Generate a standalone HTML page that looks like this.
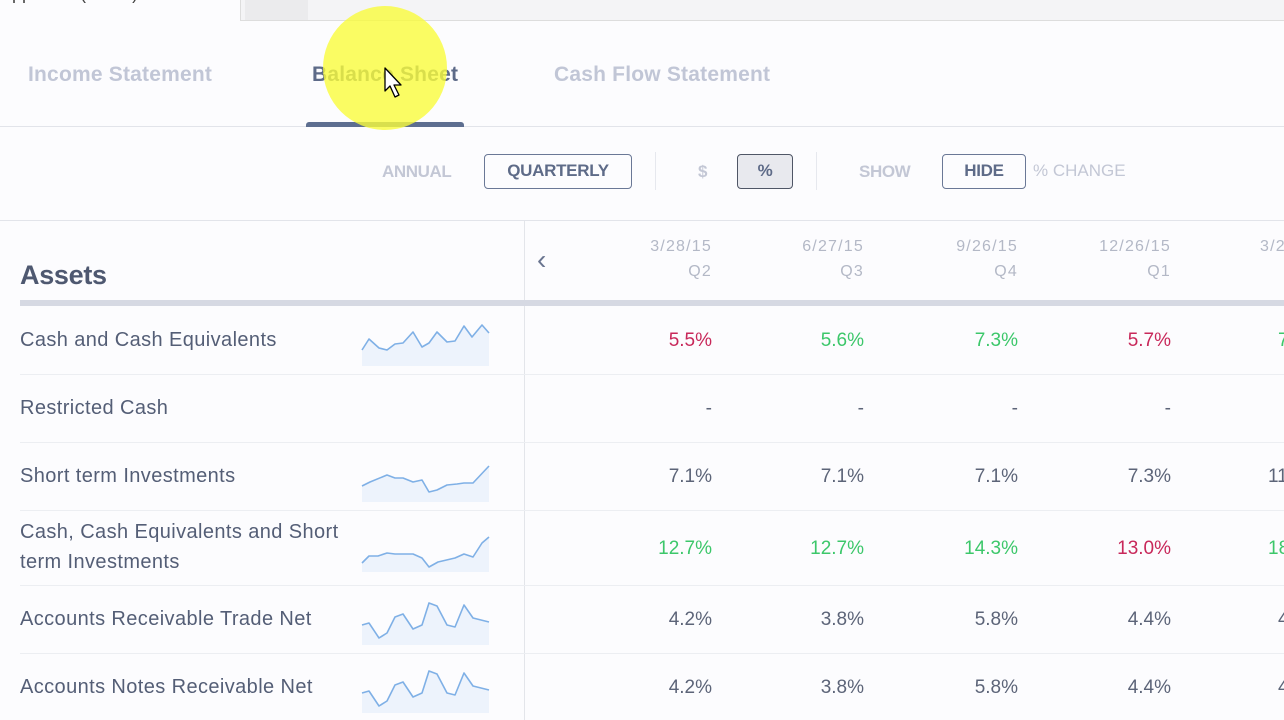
<!DOCTYPE html>
<html><head><meta charset="utf-8"><style>
*{margin:0;padding:0;box-sizing:border-box}
body{width:1284px;height:720px;overflow:hidden;background:#fcfcfe;font-family:"Liberation Sans",sans-serif;position:relative;color:#505a70}
.a{position:absolute;white-space:nowrap}
.tab{font-size:21px;color:#c1c6d6;top:63px;letter-spacing:0.2px;font-weight:bold}
.btn{border:1.5px solid #6a7896;border-radius:4px;font-size:17px;color:#5e6b88;font-weight:bold;text-align:center;letter-spacing:-0.3px}
.lbl{font-size:17px;color:#c3c7d5;letter-spacing:-0.4px;font-weight:bold}
.row{font-size:20px;color:#545e76;left:20px;letter-spacing:0.4px}
.v{font-size:19px;text-align:right;width:100px;letter-spacing:0px}
.h{font-size:16px;color:#b3b8c6;text-align:right;width:110px;line-height:25px;letter-spacing:1.2px}
.ln{position:absolute;left:20px;right:0;height:1px;background:#eceef2}
.r{color:#c8285a}.g{color:#3cc76a}.n{color:#5c6478}
</style></head><body>
<div class="a" style="left:0;top:-17px;font-size:18px;color:#444">Apple Inc (AAPL)</div>
<div class="a" style="left:240px;top:0;width:1044px;height:21px;background:#f4f4f6;border-left:1px solid #ddd;border-bottom:1px solid #ddd"></div>
<div class="a" style="left:245px;top:0;width:63px;height:20px;background:#ebebed"></div>

<div class="a tab" style="left:28px">Income Statement</div>
<div class="a tab" style="left:312px;color:#5d6a88">Balance Sheet</div>
<div class="a tab" style="left:554px">Cash Flow Statement</div>
<div class="a" style="left:0;right:0;top:126px;height:1px;background:#e2e4ea"></div>
<div class="a" style="left:306px;top:122px;width:158px;height:5px;background:#5d6e90;border-radius:3px 3px 0 0"></div>

<div class="a lbl" style="left:382px;top:162px">ANNUAL</div>
<div class="a btn" style="left:484px;top:154px;width:148px;height:35px;line-height:32px">QUARTERLY</div>
<div class="a" style="left:655px;top:152px;width:1px;height:38px;background:#e6e8ee"></div>
<div class="a lbl" style="left:698px;top:162px">$</div>
<div class="a btn" style="left:737px;top:154px;width:56px;height:35px;line-height:32px;background:#e8e9ee;border-color:#4f5666">%</div>
<div class="a" style="left:816px;top:152px;width:1px;height:38px;background:#e6e8ee"></div>
<div class="a lbl" style="left:859px;top:162px">SHOW</div>
<div class="a btn" style="left:942px;top:154px;width:84px;height:35px;line-height:32px">HIDE</div>
<div class="a" style="left:1033px;top:161px;font-size:17px;color:#c3c7d5">% CHANGE</div>
<div class="a" style="left:0;right:0;top:220px;height:1px;background:#e2e4ea"></div>

<div class="a" style="left:524px;top:221px;width:1px;height:499px;background:#e3e5ea"></div>
<div class="a" style="left:20px;top:260px;font-size:27px;font-weight:bold;color:#4e5870;letter-spacing:-0.3px">Assets</div>
<div class="a" style="left:537px;top:244px;font-size:28px;color:#6a7590">&#8249;</div>
<div class="a h" style="left:602px;top:234px">3/28/15<br>Q2</div>
<div class="a h" style="left:754px;top:234px">6/27/15<br>Q3</div>
<div class="a h" style="left:908px;top:234px">9/26/15<br>Q4</div>
<div class="a h" style="left:1061px;top:234px">12/26/15<br>Q1</div>
<div class="a h" style="left:1260px;top:234px;text-align:left">3/26</div>
<div class="a" style="left:20px;right:0;top:300px;height:6px;background:#d6d9e3"></div>

<div class="a row" style="top:329px">Cash and Cash Equivalents</div>
<div class="ln" style="top:374px"></div>
<div class="a row" style="top:397px">Restricted Cash</div>
<div class="ln" style="top:442px"></div>
<div class="a row" style="top:465px">Short term Investments</div>
<div class="ln" style="top:510px"></div>
<div class="a row" style="top:517px;line-height:30px">Cash, Cash Equivalents and Short<br>term Investments</div>
<div class="ln" style="top:585px"></div>
<div class="a row" style="top:608px">Accounts Receivable Trade Net</div>
<div class="ln" style="top:653px"></div>
<div class="a row" style="top:676px">Accounts Notes Receivable Net</div>

<div class="a v r" style="left:612px;top:330px">5.5%</div><div class="a v g" style="left:764px;top:330px">5.6%</div><div class="a v g" style="left:918px;top:330px">7.3%</div><div class="a v r" style="left:1071px;top:330px">5.7%</div><div class="a v g" style="left:1278px;top:330px;text-align:left">7</div>
<div class="a v n" style="left:612px;top:398px">-</div><div class="a v n" style="left:764px;top:398px">-</div><div class="a v n" style="left:918px;top:398px">-</div><div class="a v n" style="left:1071px;top:398px">-</div>
<div class="a v n" style="left:612px;top:466px">7.1%</div><div class="a v n" style="left:764px;top:466px">7.1%</div><div class="a v n" style="left:918px;top:466px">7.1%</div><div class="a v n" style="left:1071px;top:466px">7.3%</div><div class="a v n" style="left:1268px;top:466px;text-align:left">11</div>
<div class="a v g" style="left:612px;top:538px">12.7%</div><div class="a v g" style="left:764px;top:538px">12.7%</div><div class="a v g" style="left:918px;top:538px">14.3%</div><div class="a v r" style="left:1071px;top:538px">13.0%</div><div class="a v g" style="left:1268px;top:538px;text-align:left">18</div>
<div class="a v n" style="left:612px;top:609px">4.2%</div><div class="a v n" style="left:764px;top:609px">3.8%</div><div class="a v n" style="left:918px;top:609px">5.8%</div><div class="a v n" style="left:1071px;top:609px">4.4%</div><div class="a v n" style="left:1278px;top:609px;text-align:left">4</div>
<div class="a v n" style="left:612px;top:677px">4.2%</div><div class="a v n" style="left:764px;top:677px">3.8%</div><div class="a v n" style="left:918px;top:677px">5.8%</div><div class="a v n" style="left:1071px;top:677px">4.4%</div><div class="a v n" style="left:1278px;top:677px;text-align:left">4</div>

<svg class="a" style="left:0;top:0" width="1284" height="720" viewBox="0 0 1284 720">
<g fill="#edf3fc" stroke="none">
<path d="M362 350 369 339 379 348 387 350 395 344 403 343 413 332 422 347 429 343 437 332 447 342 455 341 464 326 472 337 482 325 489 333 489 366 362 366Z"/>
<path d="M362 486 370 482 387 475 395 478 403 478 413 482 422 480 429 492 437 490 447 485 457 484 464 483 473 483 489 466 489 502 362 502Z"/>
<path d="M362 563 369 556 378 556 387 553 395 554 413 554 422 558 429 567 438 562 455 558 464 554 473 557 482 543 489 537 489 572 362 572Z"/>
<path d="M362 625 369 623 379 638 387 633 395 617 403 614 413 629 422 625 429 603 437 606 447 625 455 627 464 605 473 618 489 622 489 645 362 645Z"/>
<path d="M362 693 369 691 379 706 387 701 395 685 403 682 413 697 422 693 429 671 437 674 447 693 455 695 464 673 473 686 489 690 489 713 362 713Z"/>
</g>
<g fill="none" stroke="#7fb0e6" stroke-width="1.6" stroke-linejoin="round">
<path d="M362 350 369 339 379 348 387 350 395 344 403 343 413 332 422 347 429 343 437 332 447 342 455 341 464 326 472 337 482 325 489 333"/>
<path d="M362 486 370 482 387 475 395 478 403 478 413 482 422 480 429 492 437 490 447 485 457 484 464 483 473 483 489 466"/>
<path d="M362 563 369 556 378 556 387 553 395 554 413 554 422 558 429 567 438 562 455 558 464 554 473 557 482 543 489 537"/>
<path d="M362 625 369 623 379 638 387 633 395 617 403 614 413 629 422 625 429 603 437 606 447 625 455 627 464 605 473 618 489 622"/>
<path d="M362 693 369 691 379 706 387 701 395 685 403 682 413 697 422 693 429 671 437 674 447 693 455 695 464 673 473 686 489 690"/>
</g>
<ellipse cx="385" cy="68" rx="62" ry="62" fill="#f9fb3c" opacity="0.8"/>
<path d="M385 68 L385 91 L390 86 L395 97 L399 95 L394 85 L401 85 Z" fill="#fff" stroke="#000" stroke-width="1.3" stroke-linejoin="round"/>
</svg>
</body></html>
